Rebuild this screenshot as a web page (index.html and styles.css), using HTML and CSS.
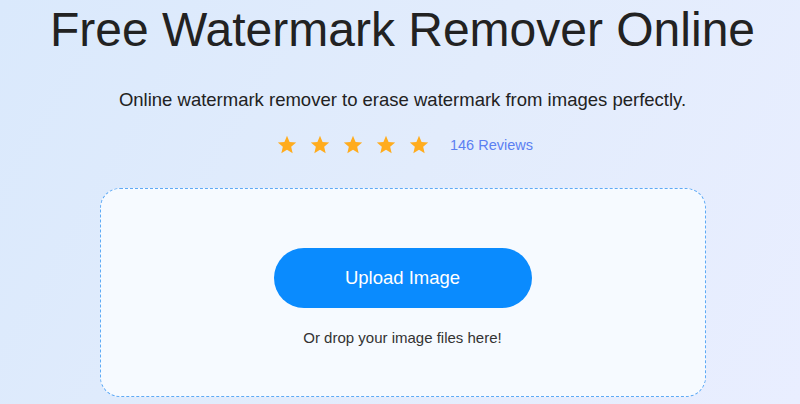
FILE: index.html
```html
<!DOCTYPE html>
<html>
<head>
<meta charset="utf-8">
<link rel="stylesheet" href="styles.css">
</head>
<body>
<main class="page">
  <h1 class="title">Free Watermark Remover Online</h1>
  <p class="subtitle">Online watermark remover to erase watermark from images perfectly.</p>
  <div class="rating">
    <div class="stars">
      <svg class="star" viewBox="0 0 24 24"><path d="M12 17.27L18.18 21l-1.64-7.03L22 9.24l-7.19-.61L12 2 9.19 8.63 2 9.24l5.46 4.73L5.82 21z"/></svg>
      <svg class="star" viewBox="0 0 24 24"><path d="M12 17.27L18.18 21l-1.64-7.03L22 9.24l-7.19-.61L12 2 9.19 8.63 2 9.24l5.46 4.73L5.82 21z"/></svg>
      <svg class="star" viewBox="0 0 24 24"><path d="M12 17.27L18.18 21l-1.64-7.03L22 9.24l-7.19-.61L12 2 9.19 8.63 2 9.24l5.46 4.73L5.82 21z"/></svg>
      <svg class="star" viewBox="0 0 24 24"><path d="M12 17.27L18.18 21l-1.64-7.03L22 9.24l-7.19-.61L12 2 9.19 8.63 2 9.24l5.46 4.73L5.82 21z"/></svg>
      <svg class="star" viewBox="0 0 24 24"><path d="M12 17.27L18.18 21l-1.64-7.03L22 9.24l-7.19-.61L12 2 9.19 8.63 2 9.24l5.46 4.73L5.82 21z"/></svg>
    </div>
    <a class="reviews" href="#">146 Reviews</a>
  </div>
  <section class="dropzone">
    <button class="upload">Upload Image</button>
    <p class="hint">Or drop your image files here!</p>
  </section>
</main>
</body>
</html>
```

FILE: styles.css
```css
html, body {
  margin: 0;
  padding: 0;
  height: 100%;
}
body {
  background: linear-gradient(120deg, #dae9fc 0%, #e2ecfc 50%, #e9eeff 100%);
  font-family: "Liberation Sans", Arial, sans-serif;
  overflow: hidden;
}
.page {
  display: flex;
  flex-direction: column;
  align-items: center;
  padding-left: 5px;
}
.title {
  margin: 0;
  padding-top: 2px;
  font-size: 48px;
  font-weight: normal;
  color: #222;
  line-height: 56px;
}
.subtitle {
  margin: 30px 0 0;
  font-size: 18.5px;
  color: #222;
  line-height: 24px;
}
.rating {
  display: flex;
  align-items: center;
  margin-top: 13px;
  height: 40px;
  padding-left: 4px;
}
.stars {
  display: flex;
  gap: 11px;
}
.star {
  width: 22px;
  height: 22px;
  fill: #ffac1e;
}
.reviews {
  margin-left: 20px;
  font-size: 14.5px;
  color: #5b7ff2;
  text-decoration: none;
}
.dropzone {
  box-sizing: border-box;
  width: 606px;
  height: 209px;
  margin-top: 23px;
  border: 1px dashed #5eaaf6;
  border-radius: 20px;
  background: #f6faff;
  display: flex;
  flex-direction: column;
  align-items: center;
  padding-top: 59px;
}
.upload {
  width: 258px;
  height: 60px;
  border: none;
  border-radius: 30px;
  background: #0a8bfe;
  color: #fff;
  font-family: "Liberation Sans", Arial, sans-serif;
  font-size: 18.5px;
  cursor: pointer;
}
.hint {
  margin: 21px 0 0;
  font-size: 15px;
  color: #333;
  line-height: 18px;
}
```
